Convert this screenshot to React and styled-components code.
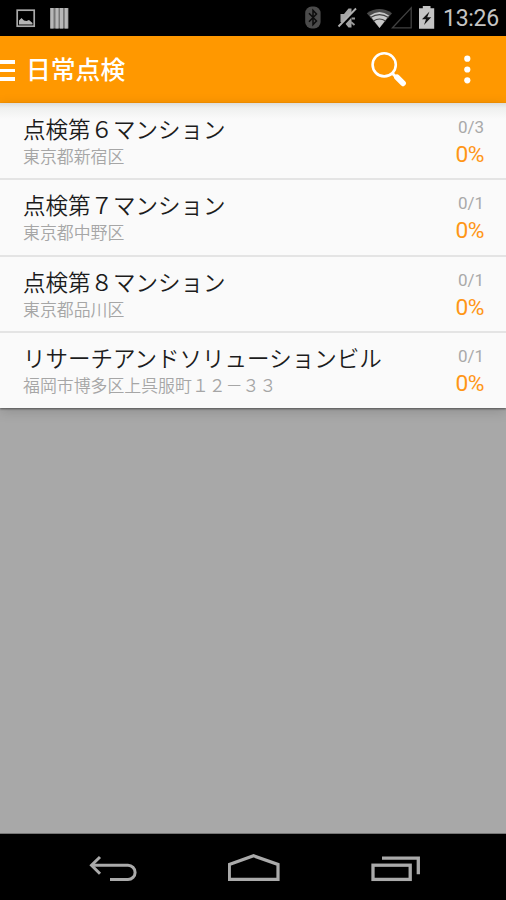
// src/App.jsx
import React from 'react';
import styled, { createGlobalStyle } from 'styled-components';

// --- DATA ---

const buildings = [
  { name: '点検第６マンション', address: '東京都新宿区', count: '0/3', percent: '0%' },
  { name: '点検第７マンション', address: '東京都中野区', count: '0/1', percent: '0%' },
  { name: '点検第８マンション', address: '東京都品川区', count: '0/1', percent: '0%' },
  { name: 'リサーチアンドソリューションビル', address: '福岡市博多区上呉服町１２－３３', count: '0/1', percent: '0%' },
];

// --- STYLED COMPONENTS ---

const GlobalStyle = createGlobalStyle`
  * {
    box-sizing: border-box;
  }

  body {
    margin: 0;
    font-family: Roboto, 'Noto Sans CJK JP', sans-serif;
  }

  svg {
    display: block;
    flex: none;
  }
`;

const Screen = styled.div`
  display: flex;
  flex-direction: column;
  width: 506px;
  height: 900px;
  overflow: hidden;
  background: #a8a8a8;
`;

const StatusBar = styled.div`
  display: flex;
  justify-content: space-between;
  flex: none;
  height: 36px;
  background: #000;
`;

const Clock = styled.span`
  width: 63px;
  margin-left: 7px;
  padding-top: 1px;
  font-size: 23px;
  line-height: 36px;
  letter-spacing: -0.3px;
  color: #c4c4c4;
  white-space: nowrap;
`;

const StatusGroup = styled.div`
  display: flex;
`;

const ActionBar = styled.header`
  display: flex;
  align-items: center;
  flex: none;
  height: 67px;
  background: #ff9800;
  color: #fff;
`;

const MenuButton = styled.button`
  display: flex;
  flex-direction: column;
  gap: 5px;
  width: 26px;
  margin-top: 2px;
  padding: 0;
  border: 0;
  background: none;
`;

const MenuLine = styled.span`
  width: 14.5px;
  height: 3.6px;
  background: #fff;
`;

const ScreenTitle = styled.h1`
  flex: 1;
  margin: 0;
  padding-bottom: 3px;
  font-family: 'Noto Sans CJK JP', sans-serif;
  font-size: 24.8px;
  font-weight: 500;
  line-height: 64px;
`;

const IconButton = styled.button`
  width: ${props => props.$width}px;
  height: 67px;
  padding: 0;
  border: 0;
  background: none;
`;

const List = styled.ul`
  flex: none;
  margin: 0;
  padding: 1px 0 0;
  list-style: none;
  background: linear-gradient(#dcdddc 0, #eff0ef 5px, #fafafa 16px);
  box-shadow: 0 1px 2px rgba(0, 0, 0, 0.45), 0 3px 12px rgba(0, 0, 0, 0.16);
`;

const Row = styled.li`
  display: flex;
  justify-content: space-between;
  height: ${props => (props.$last ? 75.3 : 76.4)}px;
  padding: 0 22px 0 23px;
  border-bottom: ${props => (props.$last ? '0' : '2px solid #e4e4e4')};
`;

const Building = styled.div`
  padding-top: 10px;
  font-family: 'Noto Sans CJK JP', sans-serif;
  white-space: nowrap;
`;

const Name = styled.div`
  font-size: 22.5px;
  font-weight: 350;
  line-height: 29px;
  color: #1c1c1c;
`;

const Address = styled.div`
  font-size: 16.9px;
  font-weight: 350;
  line-height: 25px;
  color: #a6a6a6;
`;

const Progress = styled.div`
  padding-top: 11px;
  text-align: right;
`;

const Count = styled.div`
  font-size: 17px;
  line-height: 25px;
  color: #a9a9a9;
`;

const Percent = styled.div`
  font-size: 22.8px;
  line-height: 29px;
  letter-spacing: -0.5px;
  color: #ff9616;
`;

const NavBar = styled.nav`
  display: flex;
  gap: 88px;
  flex: none;
  height: 67px;
  margin-top: auto;
  padding: 20px 0 0 88px;
  border-top: 1px solid #777;
  background: #000;
`;

// --- ICONS ---

const NotificationIcons = () => (
  <svg width="80" height="36" viewBox="0 0 80 36">
    <rect x="17.2" y="10.2" width="17" height="16" fill="none" stroke="#aaa" strokeWidth="1.7" />
    <path d="M19 24.5V20.5L21.5 18L24 20.5L26.5 21L29 20L32.5 23V24.5Z" fill="#b5b5b5" />
    <rect x="50" y="8" width="18.5" height="20.5" fill="#777" />
    <path d="M52 8V28.5M57 8V28.5M61.5 8V28.5M66.3 8V28.5" stroke="#b8b8b8" strokeWidth="3" />
  </svg>
);

const SystemIcons = () => (
  <svg width="136" height="36" viewBox="300 0 136 36">
    {/* bluetooth */}
    <rect x="305.2" y="6.5" width="15.4" height="22" rx="6.5" fill="#4b4b4b" />
    <path d="M309 13.3L316.5 21L313 24.6V10.4L316.5 14L309 21.7" fill="none" stroke="#0c0c0c" strokeWidth="1.5" />
    {/* muted ringer */}
    <path d="M340.5 14H344L348.5 8.5H351.5V27.5H348.5L344 22H340.5Z" fill="#a4a4a4" />
    <path d="M339.7 27.5L357.2 8.8" stroke="#000" strokeWidth="3.6" />
    <path d="M338.5 26.5L356 8.5" stroke="#b0b0b0" strokeWidth="1.9" />
    <path d="M352 18.5L355 18.5M351 22L354.5 25" stroke="#999" strokeWidth="1.8" />
    {/* wifi */}
    <path d="M366.8 13.2Q379.5 4.8 392 13.2L379.5 28Z" fill="#4a4a4a" />
    <path d="M370 15.5Q379.5 8.5 389 15.5L379.5 28Z" fill="#c8c8c8" />
    <path d="M370.5 17.6Q379.5 11.8 388.5 17.6M373.5 21Q379.5 17 385.5 21" fill="none" stroke="#444" strokeWidth="1.2" />
    {/* no signal */}
    <path d="M392.5 27.8L411.2 7.8V27.8Z" fill="none" stroke="#414141" strokeWidth="1.3" />
    {/* battery */}
    <path d="M419 8.2H422.8V6H430.5V8.2H434.2V28.8H419Z" fill="#c4c4c4" />
    <path d="M429.5 11.5L422 19.3H426L424 25L431.2 17.2H427.2Z" fill="#111" />
  </svg>
);

const SearchIcon = () => (
  <svg width="60" height="67" viewBox="358 36 60 67" fill="none" stroke="#fff">
    <circle cx="384.2" cy="64.8" r="11.6" strokeWidth="2.6" />
    <path d="M392 73L396 77" strokeWidth="3" />
    <path d="M397 77.3L403 83.3" strokeWidth="5.8" strokeLinecap="round" />
  </svg>
);

const MoreIcon = () => (
  <svg width="78" height="67" viewBox="428 36 78 67" fill="#fff">
    <circle cx="467.3" cy="58.7" r="3.1" />
    <circle cx="467.3" cy="69.5" r="3.1" />
    <circle cx="467.3" cy="80.3" r="3.1" />
  </svg>
);

const BackIcon = () => (
  <svg width="52" height="32" viewBox="88 854 52 32" fill="none" stroke="#aaa" strokeWidth="3">
    <path d="M100 857L91.5 865.3L100 873.8" />
    <path d="M92 865.3H128A7.1 7.1 0 0 1 128 879.5H110" />
  </svg>
);

const HomeIcon = () => (
  <svg width="54" height="32" viewBox="228 854 54 32" fill="none" stroke="#aaa" strokeWidth="3.2">
    <path d="M229.3 879.3V864.5L253.6 855.8L278 864.5V879.3Z" />
  </svg>
);

const RecentIcon = () => (
  <svg width="52" height="32" viewBox="370 854 52 32" fill="none" stroke="#aaa" strokeWidth="3.3">
    <rect x="373" y="865.2" width="37.2" height="14.2" />
    <path d="M382 858.2H418.3V874.3" />
  </svg>
);

// --- COMPONENT ---

const App = () => (
  <>
    <GlobalStyle />
    <Screen>
      <StatusBar>
        <NotificationIcons />
        <StatusGroup>
          <SystemIcons />
          <Clock>13:26</Clock>
        </StatusGroup>
      </StatusBar>

      <ActionBar>
        <MenuButton aria-label="メニュー">
          <MenuLine />
          <MenuLine />
          <MenuLine />
        </MenuButton>
        <ScreenTitle>日常点検</ScreenTitle>
        <IconButton $width={70} aria-label="検索">
          <SearchIcon />
        </IconButton>
        <IconButton $width={78} aria-label="その他">
          <MoreIcon />
        </IconButton>
      </ActionBar>

      <List>
        {buildings.map((building, index) => (
          <Row key={building.name} $last={index === buildings.length - 1}>
            <Building>
              <Name>{building.name}</Name>
              <Address>{building.address}</Address>
            </Building>
            <Progress>
              <Count>{building.count}</Count>
              <Percent>{building.percent}</Percent>
            </Progress>
          </Row>
        ))}
      </List>

      <NavBar>
        <BackIcon />
        <HomeIcon />
        <RecentIcon />
      </NavBar>
    </Screen>
  </>
);

export default App;
